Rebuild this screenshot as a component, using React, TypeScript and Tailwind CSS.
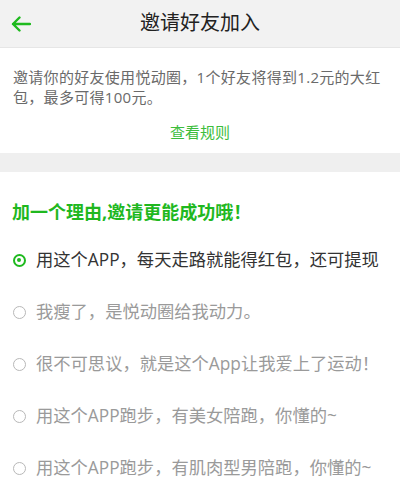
import { useState } from 'react';

const reasons = [
    '用这个APP，每天走路就能得红包，还可提现',
    '我瘦了，是悦动圈给我动力。',
    '很不可思议，就是这个App让我爱上了运动！',
    '用这个APP跑步，有美女陪跑，你懂的~',
    '用这个APP跑步，有肌肉型男陪跑，你懂的~',
];

export default function App() {
    const [selected, setSelected] = useState(0);

    return (
        <div className="w-[400px] h-[502px] overflow-hidden bg-[#efefef] font-['Open_Sans','Noto_Sans_CJK_SC',sans-serif]">
            {/* Header */}
            <div className="h-[48px] flex items-center relative bg-[#f2f2f2] border-b border-[#e6e6e6]">
                <svg className="ml-[11px]" width="20" height="16" viewBox="0 0 20 16" fill="none">
                    <path d="M19 8H2M8.5 1.5L2 8l6.5 6.5" stroke="#1fba1f" strokeWidth="2.4" strokeLinecap="round" strokeLinejoin="round" />
                </svg>
                <h1 className="absolute left-0 right-0 text-center text-[20px] leading-[24px] text-[#222] pointer-events-none -mt-[2px]">
                    邀请好友加入
                </h1>
            </div>

            {/* Intro card */}
            <div className="bg-white pt-[19px] pb-[11px] overflow-hidden">
                <p className="pl-[13px] text-[15px] leading-[20px] tracking-[0.3px] text-[#6a6a6a] whitespace-nowrap">
                    邀请你的好友使用悦动圈，1个好友将得到1.2元的大红
                </p>
                <p className="pl-[13px] text-[15px] leading-[20px] tracking-[0.3px] text-[#6a6a6a]">包，最多可得100元。</p>
                <p className="mt-[15px] text-center text-[15px] leading-[20px] text-[#3cbd3c]">查看规则</p>
            </div>

            <div className="h-[19px]" />

            {/* Reasons */}
            <div className="bg-white pt-[28px] h-full">
                <h2 className="pl-[12px] text-[18px] leading-[24px] font-bold text-[#1fb81f]">
                    加一个理由,邀请更能成功哦！
                </h2>
                <div className="mt-[10px] flex flex-col">
                    {reasons.map((r, i) => (
                        <button
                            key={r}
                            onClick={() => setSelected(i)}
                            className="h-[52px] flex items-center text-left"
                        >
                            <span className="w-[36px] flex justify-center pl-[2px]">
                                {selected === i ? (
                                    <span className="w-[13px] h-[13px] rounded-full border-[2.5px] border-[#1fba1f] flex items-center justify-center">
                                        <span className="w-[4px] h-[4px] rounded-full bg-[#1fba1f]" />
                                    </span>
                                ) : (
                                    <span className="w-[13px] h-[13px] rounded-full border-[1.5px] border-[#b8b8b8]" />
                                )}
                            </span>
                            <span
                                className={
                                    selected === i
                                        ? 'text-[17.3px] leading-[24px] text-[#333]'
                                        : 'text-[17.3px] leading-[24px] text-[#9a9a9a]'
                                }
                            >
                                {r}
                            </span>
                        </button>
                    ))}
                </div>
            </div>
        </div>
    );
}
